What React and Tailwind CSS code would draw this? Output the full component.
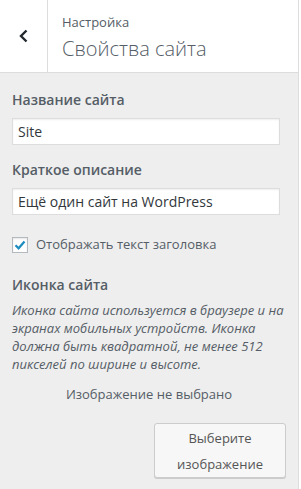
export default function App() {
  return (
    <div
      className="w-[301px] h-[489px] overflow-hidden bg-white"
      style={{ fontFamily: '"Open Sans", "Liberation Sans", sans-serif' }}
    >
      <div className="w-[299px] h-full bg-[#eeeeee] border-r border-[#dddddd]">
        {/* Header */}
        <div className="flex h-[73px] bg-white border-b border-[#dddddd]">
          <button className="w-[48px] h-full flex items-center justify-center border-r border-[#dddddd] text-[#23282d]">
            <svg width="12" height="16" viewBox="0 0 12 16">
              <path d="M8.5 2.5 L3 8 L8.5 13.5" fill="none" stroke="currentColor" strokeWidth="2.4" />
            </svg>
          </button>
          <div className="pl-[14px] pt-[13px]">
            <div className="text-[13px] leading-[18px] text-[#555d66]">Настройка</div>
            <div className="text-[20px] leading-[28px] text-[#555d66] font-light mt-[4px]">
              Свойства сайта
            </div>
          </div>
        </div>

        {/* Body */}
        <div className="px-[12px] pt-[17px]">
          <div className="text-[14px] leading-[20px] font-semibold text-[#555d66]">Название сайта</div>
          <div className="mt-[8px] h-[27px] bg-white border border-[#dddddd] shadow-[inset_0_1px_2px_rgba(0,0,0,0.07)] flex items-center px-[5px] text-[14px] text-[#32373c] mr-[6px]">
            Site
          </div>

          <div className="mt-[15px] text-[14px] leading-[20px] font-semibold text-[#555d66]">Краткое описание</div>
          <div className="mt-[8px] h-[27px] bg-white border border-[#dddddd] shadow-[inset_0_1px_2px_rgba(0,0,0,0.07)] flex items-center px-[5px] text-[14px] text-[#32373c] mr-[6px]">
            Ещё один сайт на WordPress
          </div>

          <div className="mt-[20px] flex items-center gap-[8px]">
            <span className="w-[16px] h-[16px] bg-white border border-[#b4b9be] shadow-[inset_0_1px_2px_rgba(0,0,0,0.1)] flex items-center justify-center">
              <svg width="12" height="12" viewBox="0 0 12 12">
                <path d="M1.5 6.2 L4.6 9.3 L10.5 2.5" fill="none" stroke="#1e8cbe" strokeWidth="2.2" />
              </svg>
            </span>
            <span className="text-[13px] text-[#555d66]">Отображать текст заголовка</span>
          </div>

          <div className="mt-[20px] text-[14px] leading-[20px] font-semibold text-[#555d66]">Иконка сайта</div>
          <p className="mt-[6px] text-[13px] leading-[18px] italic text-[#555d66] pr-[2px]">
            Иконка сайта используется в браузере и на экранах мобильных устройств. Иконка должна быть квадратной, не менее 512 пикселей по ширине и высоте.
          </p>

          <div className="mt-[12px] text-center text-[13px] leading-[18px] text-[#555d66]">Изображение не выбрано</div>

          <div className="mt-[20px] flex justify-end">
            <button className="w-[132px] px-[10px] pt-[1px] bg-[#f7f7f7] border border-[#cccccc] rounded-[3px] shadow-[0_1px_0_#cccccc] text-[13px] leading-[26px] text-[#555555]">
              Выберите изображение
            </button>
          </div>
        </div>
      </div>
    </div>
  );
}
